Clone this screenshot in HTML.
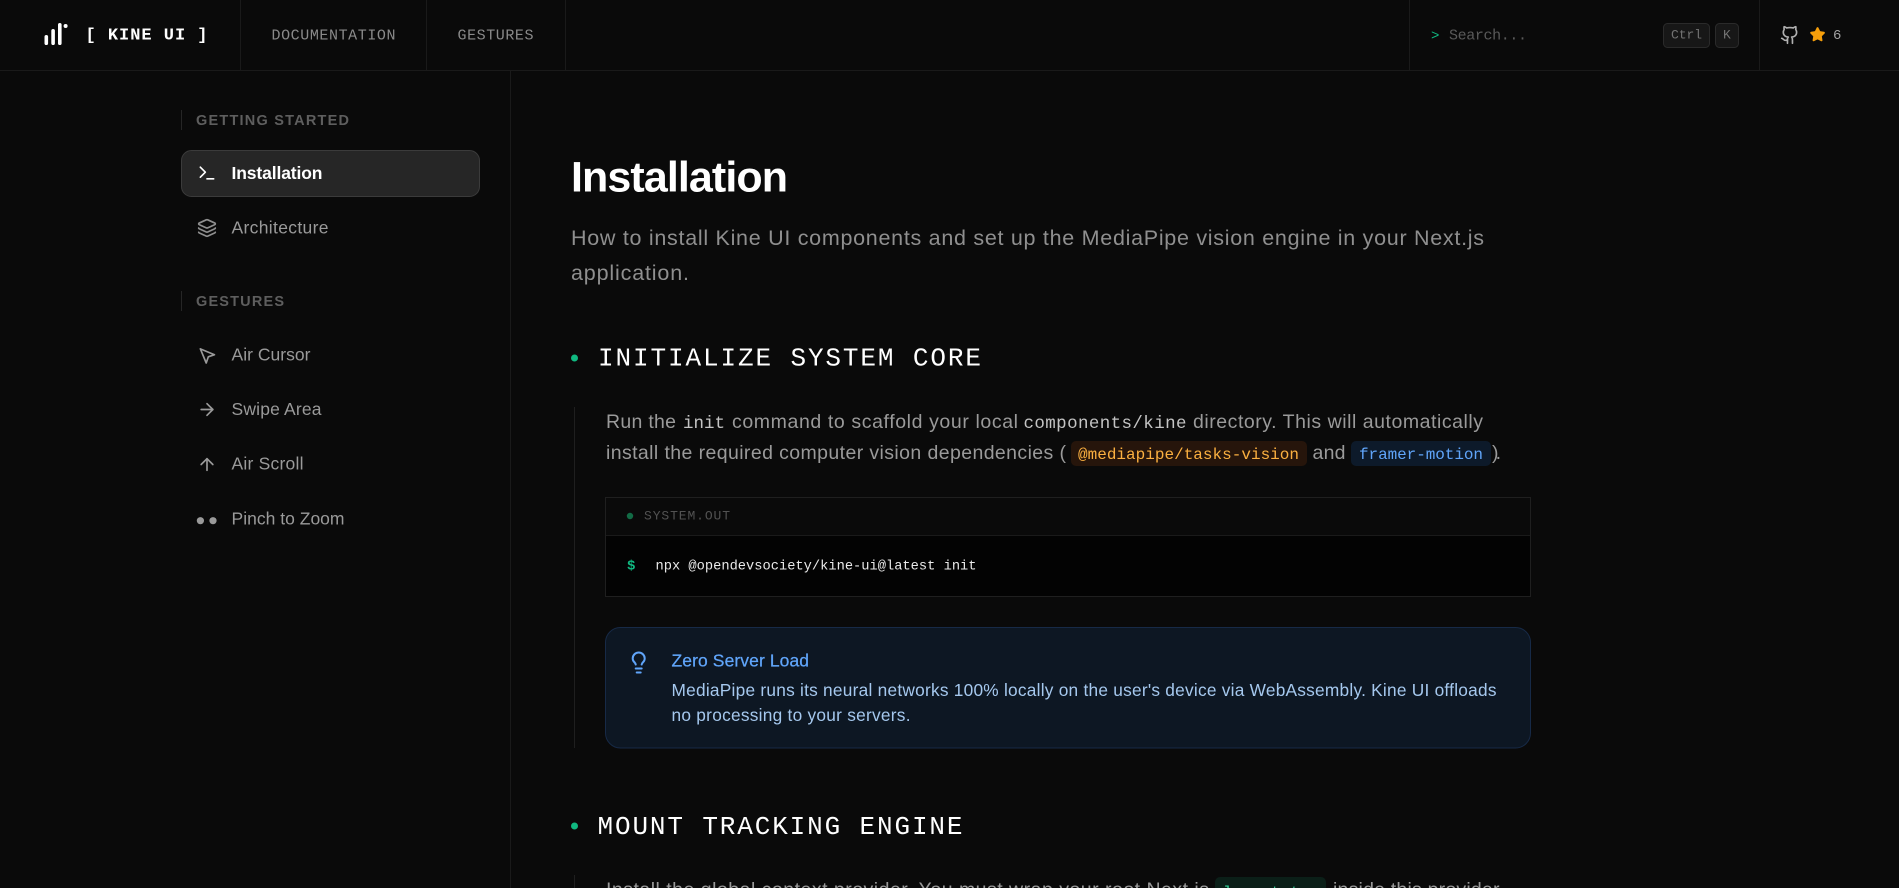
<!DOCTYPE html>
<html lang="en">
<head>
<meta charset="utf-8">
<title>Installation - Kine UI</title>
<style>
html,body{margin:0;padding:0;background:#0a0a0a;width:1899px;height:888px;overflow:hidden}
svg{display:block}
text{white-space:pre}
.s{font-family:"Liberation Sans",sans-serif}
.m{font-family:"Liberation Mono",monospace}
.i{fill:none;stroke-width:2;stroke-linecap:round;stroke-linejoin:round}
</style>
</head>
<body>
<svg width="1899" height="888" viewBox="0 0 1899 888" xmlns="http://www.w3.org/2000/svg">
<rect width="1899" height="888" fill="#0a0a0a"/>

<!-- header -->
<g stroke="#1a1a1a" stroke-width="1">
<line x1="0" y1="70.5" x2="1899" y2="70.5"/>
<line x1="240.5" y1="0" x2="240.5" y2="70"/>
<line x1="426.5" y1="0" x2="426.5" y2="70"/>
<line x1="565.5" y1="0" x2="565.5" y2="70"/>
<line x1="1409.5" y1="0" x2="1409.5" y2="70"/>
<line x1="1759.5" y1="0" x2="1759.5" y2="70"/>
<line x1="510.5" y1="70" x2="510.5" y2="888"/>
</g>
<g fill="#fff">
<rect x="44.5" y="35" width="3.6" height="10" rx="1.8"/>
<rect x="51.3" y="29" width="3.6" height="16" rx="1.8"/>
<rect x="58" y="23" width="3.6" height="22" rx="1.8"/>
<circle cx="65.6" cy="26" r="2"/>
</g>
<text class="m" x="85.5" y="39.5" font-size="17" font-weight="700" fill="#fff" textLength="122">[ KINE UI ]</text>
<text class="m" x="271.5" y="39.5" font-size="15" fill="#8a8a8a" textLength="124">DOCUMENTATION</text>
<text class="m" x="457.5" y="39.5" font-size="15" fill="#8a8a8a" textLength="76">GESTURES</text>

<text class="m" x="1431" y="39.5" font-size="14" fill="#10b981" textLength="8">&gt;</text>
<text class="m" x="1449" y="39.5" font-size="15" fill="#5a5a5a" textLength="78">Search...</text>
<rect x="1663.5" y="23.5" width="46" height="24" rx="4" fill="#171717" stroke="#2a2a2a"/>
<text class="m" x="1671" y="38.5" font-size="13" fill="#737373" textLength="31">Ctrl</text>
<rect x="1715.5" y="23.5" width="23" height="24" rx="4" fill="#171717" stroke="#2a2a2a"/>
<text class="m" x="1723" y="38.5" font-size="13" fill="#737373" textLength="8">K</text>
<g class="i" stroke="#b0b0b0" transform="translate(1780 25) scale(.83)">
<path d="M15 22v-4a4.8 4.8 0 0 0-1-3.5c3 0 6-2 6-5.5.08-1.25-.27-2.48-1-3.5.28-1.15.28-2.35 0-3.5 0 0-1 0-3 1.5-2.64-.5-5.36-.5-8 0C6 2 5 2 5 2c-.3 1.15-.3 2.35 0 3.5A5.403 5.403 0 0 0 4 9c0 3.5 3 5.5 6 5.5-.39.49-.68 1.05-.85 1.65-.17.6-.22 1.23-.15 1.85v4"/>
<path d="M9 18c-4.51 2-5-2-7-2"/>
</g>
<path transform="translate(1809.5 26.5) scale(.67)" fill="#f59e0b" stroke="#f59e0b" stroke-width="2" stroke-linejoin="round" d="M11.525 2.295a.53.53 0 0 1 .95 0l2.31 4.679a2.123 2.123 0 0 0 1.595 1.16l5.166.756a.53.53 0 0 1 .294.904l-3.736 3.638a2.123 2.123 0 0 0-.611 1.878l.882 5.14a.53.53 0 0 1-.771.56l-4.618-2.428a2.122 2.122 0 0 0-1.973 0L6.396 21.01a.53.53 0 0 1-.77-.56l.881-5.139a2.122 2.122 0 0 0-.611-1.879L2.16 9.795a.53.53 0 0 1 .294-.906l5.165-.755a2.122 2.122 0 0 0 1.597-1.16z"/>
<text class="m" x="1833" y="39" font-size="14" fill="#a3a3a3" textLength="8.4">6</text>

<!-- sidebar -->
<rect x="181" y="110" width="1" height="20" fill="#262626"/>
<text class="s" x="196" y="125" font-size="14.5" font-weight="700" fill="#5e5e5e" textLength="153">GETTING STARTED</text>
<rect x="181.5" y="150.5" width="298" height="46" rx="10" fill="#262626" stroke="#3b3b3b"/>
<g class="i" stroke="#fff" transform="translate(197 163) scale(.833)">
<path d="M4 17l6-6-6-6"/><path d="M12 19h8"/>
</g>
<text class="s" x="231.5" y="179" font-size="17.5" font-weight="700" fill="#fff" textLength="91">Installation</text>
<g class="i" stroke="#8f8f8f" transform="translate(197 218) scale(.833)">
<path d="M12.83 2.18a2 2 0 0 0-1.66 0L2.6 6.08a1 1 0 0 0 0 1.83l8.58 3.91a2 2 0 0 0 1.66 0l8.58-3.9a1 1 0 0 0 0-1.83z"/>
<path d="M2 12a1 1 0 0 0 .58.91l8.6 3.91a2 2 0 0 0 1.65 0l8.58-3.9A1 1 0 0 0 22 12"/>
<path d="M2 17a1 1 0 0 0 .58.91l8.6 3.91a2 2 0 0 0 1.65 0l8.58-3.9A1 1 0 0 0 22 17"/>
</g>
<text class="s" x="231.5" y="233.5" font-size="17.5" fill="#9a9a9a" textLength="97">Architecture</text>

<rect x="181" y="291" width="1" height="20" fill="#262626"/>
<text class="s" x="196" y="306" font-size="14.5" font-weight="700" fill="#5e5e5e" textLength="88">GESTURES</text>

<g class="i" stroke="#9a9a9a" transform="translate(197 345.5) scale(.833)">
<path d="M4 4l7.07 17 2.51-7.39L21 11.07z"/>
</g>
<text class="s" x="231.5" y="360.5" font-size="17.5" fill="#9a9a9a" textLength="79">Air Cursor</text>
<g class="i" stroke="#9a9a9a" transform="translate(197 399.5) scale(.833)">
<path d="M5 12h14"/><path d="M12 5l7 7-7 7"/>
</g>
<text class="s" x="231.5" y="415" font-size="17.5" fill="#9a9a9a" textLength="90">Swipe Area</text>
<g class="i" stroke="#9a9a9a" transform="translate(197 454.5) scale(.833)">
<path d="M5 12l7-7 7 7"/><path d="M12 19V5"/>
</g>
<text class="s" x="231.5" y="469.5" font-size="17.5" fill="#9a9a9a" textLength="72">Air Scroll</text>
<circle cx="200.4" cy="520.7" r="3.6" fill="#9a9a9a"/>
<circle cx="213" cy="520.7" r="3.6" fill="#9a9a9a"/>
<text class="s" x="231.5" y="524.5" font-size="17.5" fill="#9a9a9a" textLength="113">Pinch to Zoom</text>

<!-- main -->
<text class="s" x="571" y="191.5" font-size="43" font-weight="700" fill="#fff" textLength="217">Installation</text>
<text class="s" x="571" y="245" font-size="21.5" fill="#8f8f8f" textLength="913">How to install Kine UI components and set up the MediaPipe vision engine in your Next.js</text>
<text class="s" x="571" y="280" font-size="21.5" fill="#8f8f8f" textLength="118">application.</text>

<circle cx="574.5" cy="358" r="3.5" fill="#10b981"/>
<text class="m" x="598" y="365.5" font-size="26" fill="#fff" textLength="383">INITIALIZE SYSTEM CORE</text>

<line x1="574.5" y1="407" x2="574.5" y2="748" stroke="#1f1f1f"/>

<text class="s" x="606" y="428" font-size="19.5" fill="#9a9a9a" textLength="70">Run the</text>
<text class="m" x="683" y="428" font-size="17.5" fill="#c4c4c4" textLength="42">init</text>
<text class="s" x="732" y="428" font-size="19.5" fill="#9a9a9a" textLength="286">command to scaffold your local</text>
<text class="m" x="1023.5" y="428" font-size="17.5" fill="#c4c4c4" textLength="163">components/kine</text>
<text class="s" x="1193" y="428" font-size="19.5" fill="#9a9a9a" textLength="290">directory. This will automatically</text>

<text class="s" x="606" y="459" font-size="19.5" fill="#9a9a9a" textLength="460">install the required computer vision dependencies (</text>
<rect x="1071" y="441" width="236" height="25" rx="5" fill="#26150b"/>
<text class="m" x="1078" y="459" font-size="16" fill="#fbb040" textLength="221">@mediapipe/tasks-vision</text>
<text class="s" x="1312.5" y="459" font-size="19.5" fill="#9a9a9a" textLength="33">and</text>
<rect x="1351" y="441" width="140" height="25" rx="5" fill="#0d1a2a"/>
<text class="m" x="1359" y="459" font-size="16" fill="#60a5fa" textLength="124">framer-motion</text>
<text class="s" x="1492" y="459" font-size="19.5" fill="#9a9a9a" textLength="9">).</text>

<!-- code -->
<rect x="605.5" y="497.5" width="925" height="99" fill="#030303" stroke="#1f1f1f"/>
<rect x="606" y="498" width="924" height="37" fill="#0a0a0a"/>
<line x1="606" y1="535.5" x2="1530" y2="535.5" stroke="#1a1a1a"/>
<circle cx="630" cy="516" r="3.2" fill="#126b45"/>
<text class="m" x="644" y="519.5" font-size="13" fill="#525252" textLength="86">SYSTEM.OUT</text>
<text class="m" x="627" y="569.5" font-size="14" font-weight="700" fill="#10b981" textLength="8.4">$</text>
<text class="m" x="655.5" y="569.5" font-size="13.7" fill="#eaeaea" textLength="321">npx @opendevsociety/kine-ui@latest init</text>

<!-- callout -->
<rect x="605.5" y="627.5" width="925" height="120.5" rx="15" fill="#0d1723" stroke="#172a47"/>
<g class="i" stroke="#60a5fa" transform="translate(626.7 650.5)">
<path d="M15 14c.2-1 .7-1.7 1.5-2.5 1-.9 1.5-2.2 1.5-3.5A6 6 0 0 0 6 8c0 1 .2 2.2 1.5 3.5.7.7 1.3 1.5 1.5 2.5"/>
<path d="M9 18h6"/><path d="M10 22h4"/>
</g>
<text class="s" x="671.5" y="666.5" font-size="17.5" fill="#60a5fa" stroke="#60a5fa" stroke-width=".25" textLength="137.5">Zero Server Load</text>
<text class="s" x="671.5" y="696" font-size="17.3" fill="#a5c8ee" textLength="825">MediaPipe runs its neural networks 100% locally on the user's device via WebAssembly. Kine UI offloads</text>
<text class="s" x="671.5" y="721" font-size="17.3" fill="#a5c8ee" textLength="239">no processing to your servers.</text>

<circle cx="574.5" cy="826" r="3.5" fill="#10b981"/>
<text class="m" x="597.5" y="834" font-size="26" fill="#fff" textLength="365">MOUNT TRACKING ENGINE</text>

<line x1="574.5" y1="875" x2="574.5" y2="888" stroke="#1f1f1f"/>
<text class="s" x="606" y="896" font-size="19.5" fill="#9a9a9a" textLength="603">Install the global context provider. You must wrap your root Next.js</text>
<rect x="1215" y="877" width="111" height="25" rx="5" fill="#0b1f18"/>
<text class="m" x="1223" y="897" font-size="16" fill="#34d399" textLength="96">layout.tsx</text>
<text class="s" x="1333" y="896" font-size="19.5" fill="#9a9a9a" textLength="171">inside this provider.</text>
</svg>
</body>
</html>
